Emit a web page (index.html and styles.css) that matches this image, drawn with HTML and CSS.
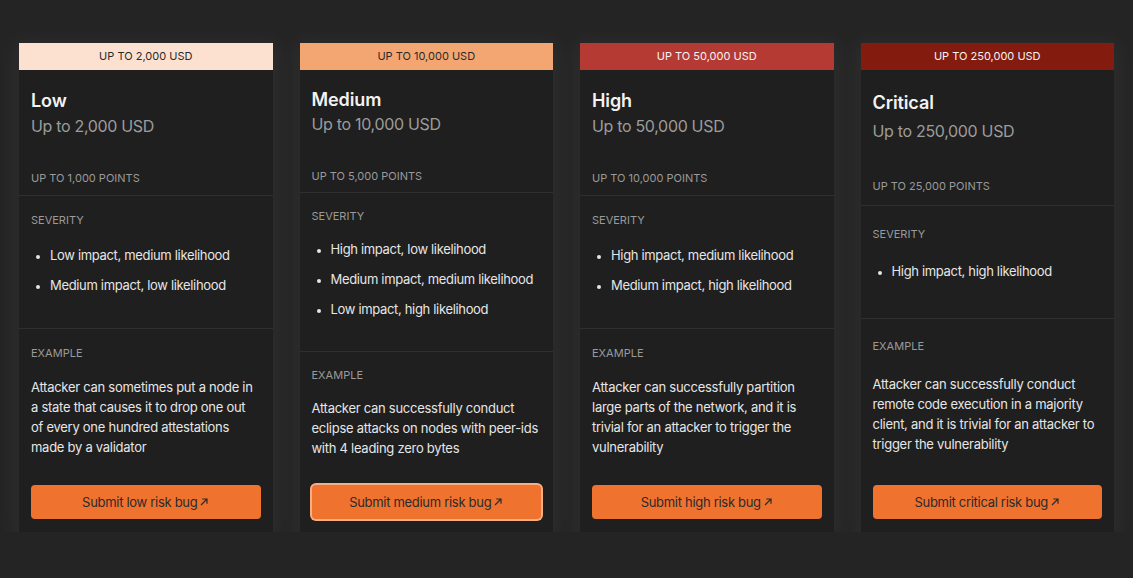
FILE: index.html
```html
<!DOCTYPE html>
<html lang="en">
<head>
<meta charset="utf-8">
<title>Bounty tiers</title>
<link rel="stylesheet" href="styles.css">
</head>
<body>
<main class="tiers">
  <article class="card">
    <div class="band band-low">UP TO 2,000 USD</div>
    <section class="sec sec-top">
      <h2 class="title">Low</h2>
      <p class="amount">Up to 2,000 USD</p>
      <p class="label points">UP TO 1,000 POINTS</p>
    </section>
    <section class="sec sec-sev">
      <p class="label">SEVERITY</p>
      <ul class="list">
        <li>Low impact, medium likelihood</li>
        <li>Medium impact, low likelihood</li>
      </ul>
    </section>
    <section class="sec sec-ex">
      <p class="label">EXAMPLE</p>
      <p class="text">Attacker can sometimes put a node in a state that causes it to drop one out of every one hundred attestations made by a validator</p>
    </section>
    <div class="foot"><a class="btn" href="#">Submit low risk bug<svg class="arrow" viewBox="0 0 10 10"><path d="M2 8L8 2M3.2 2H8V6.8"/></svg></a></div>
  </article>

  <article class="card">
    <div class="band band-medium">UP TO 10,000 USD</div>
    <section class="sec sec-top">
      <h2 class="title">Medium</h2>
      <p class="amount">Up to 10,000 USD</p>
      <p class="label points">UP TO 5,000 POINTS</p>
    </section>
    <section class="sec sec-sev">
      <p class="label">SEVERITY</p>
      <ul class="list">
        <li>High impact, low likelihood</li>
        <li>Medium impact, medium likelihood</li>
        <li>Low impact, high likelihood</li>
      </ul>
    </section>
    <section class="sec sec-ex">
      <p class="label">EXAMPLE</p>
      <p class="text">Attacker can successfully conduct eclipse attacks on nodes with peer-ids with 4 leading zero bytes</p>
    </section>
    <div class="foot"><a class="btn btn-focus" href="#">Submit medium risk bug<svg class="arrow" viewBox="0 0 10 10"><path d="M2 8L8 2M3.2 2H8V6.8"/></svg></a></div>
  </article>

  <article class="card">
    <div class="band band-high">UP TO 50,000 USD</div>
    <section class="sec sec-top">
      <h2 class="title">High</h2>
      <p class="amount">Up to 50,000 USD</p>
      <p class="label points">UP TO 10,000 POINTS</p>
    </section>
    <section class="sec sec-sev">
      <p class="label">SEVERITY</p>
      <ul class="list">
        <li>High impact, medium likelihood</li>
        <li>Medium impact, high likelihood</li>
      </ul>
    </section>
    <section class="sec sec-ex">
      <p class="label">EXAMPLE</p>
      <p class="text">Attacker can successfully partition large parts of the network, and it is trivial for an attacker to trigger the vulnerability</p>
    </section>
    <div class="foot"><a class="btn" href="#">Submit high risk bug<svg class="arrow" viewBox="0 0 10 10"><path d="M2 8L8 2M3.2 2H8V6.8"/></svg></a></div>
  </article>

  <article class="card">
    <div class="band band-critical">UP TO 250,000 USD</div>
    <section class="sec sec-top">
      <h2 class="title">Critical</h2>
      <p class="amount">Up to 250,000 USD</p>
      <p class="label points">UP TO 25,000 POINTS</p>
    </section>
    <section class="sec sec-sev">
      <p class="label">SEVERITY</p>
      <ul class="list">
        <li>High impact, high likelihood</li>
      </ul>
    </section>
    <section class="sec sec-ex">
      <p class="label">EXAMPLE</p>
      <p class="text">Attacker can successfully conduct remote code execution in a majority client, and it is trivial for an attacker to trigger the vulnerability</p>
    </section>
    <div class="foot"><a class="btn" href="#">Submit critical risk bug<svg class="arrow" viewBox="0 0 10 10"><path d="M2 8L8 2M3.2 2H8V6.8"/></svg></a></div>
  </article>
</main>
</body>
</html>
```

FILE: styles.css
```css
* { box-sizing: border-box; }

html, body {
  margin: 0;
  padding: 0;
  background: #242424;
  font-family: Inter, "Noto Sans", "Liberation Sans", sans-serif;
  color: #e6e6e6;
}

.tiers {
  display: grid;
  grid-template-columns: repeat(4, 1fr);
  column-gap: 27px;
  padding: 43px 19px 0;
  align-items: stretch;
}

.card {
  display: flex;
  flex-direction: column;
  background: #1f1f1f;
  box-shadow: 0 4px 20px 6px rgba(255, 255, 255, 0.045);
}

.band {
  height: 27px;
  line-height: 27px;
  text-align: center;
  font-size: 11px;
  color: #2a2a2a;
}
.band-low { background: #fde1d0; }
.band-medium { background: #f4a672; }
.band-high { background: #b53a33; color: #f4f4f4; }
.band-critical { background: #831b0f; color: #f4f4f4; }

.sec {
  flex: 1 1 auto;
  display: flex;
  flex-direction: column;
  justify-content: space-evenly;
  padding: 0 12px;
}
.sec + .sec { border-top: 1px solid #2f2f2f; }

.sec p, .sec h2, .sec ul { margin: 0; }

.sec-top { padding-top: 18px; padding-bottom: 8px; }
.sec-sev { padding-top: 15px; padding-bottom: 32px; }
.sec-ex { padding-top: 15px; padding-bottom: 27px; }

.title {
  font-size: 18px;
  line-height: 24px;
  font-weight: 600;
  color: #f2f2f2;
  letter-spacing: -0.1px;
}
.amount {
  font-size: 16px;
  line-height: 24px;
  color: #9c9c9c;
  letter-spacing: -0.32px;
}
.label {
  font-size: 11px;
  line-height: 16px;
  color: #9a9a9a;
}
.points { margin-top: 32px !important; }

.list {
  margin-top: 15px !important;
  padding-left: 19px;
  font-size: 13px;
  line-height: 20px;
  color: #e6e6e6;
  letter-spacing: -0.33px;
}
.list li + li { margin-top: 10px; }
.list li::marker { font-size: 11px; }

.text {
  margin-top: 15px !important;
  font-size: 13px;
  line-height: 20px;
  color: #e6e6e6;
  letter-spacing: -0.27px;
}

.foot { padding: 0 12px 13px; }

.btn {
  display: flex;
  align-items: center;
  justify-content: center;
  height: 34px;
  border-radius: 4px;
  background: #f0722f;
  color: #2b2b2b;
  font-size: 13px;
  letter-spacing: -0.3px;
  text-decoration: none;
}
.btn-focus { box-shadow: 0 0 0 2px #f7ae80; }

.arrow {
  width: 10px;
  height: 10px;
  margin-left: 2px;
  fill: none;
  stroke: #2b2b2b;
  stroke-width: 1.2;
}
```
